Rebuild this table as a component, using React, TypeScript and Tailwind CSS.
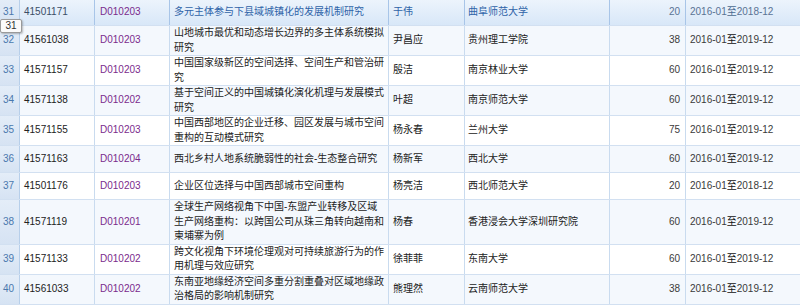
import React from 'react';

type Row = {
  no: number;
  id: string;
  code: string;
  title: string;
  name: string;
  org: string;
  amount: number;
  period: string;
};

const rows: Row[] = [
  { no: 31, id: '41501171', code: 'D010203', title: '多元主体参与下县域城镇化的发展机制研究', name: '于伟', org: '曲阜师范大学', amount: 20, period: '2018-12' },
  { no: 32, id: '41561038', code: 'D010203', title: '山地城市最优和动态增长边界的多主体系统模拟研究', name: '尹昌应', org: '贵州理工学院', amount: 38, period: '2019-12' },
  { no: 33, id: '41571157', code: 'D010203', title: '中国国家级新区的空间选择、空间生产和管治研究', name: '殷洁', org: '南京林业大学', amount: 60, period: '2019-12' },
  { no: 34, id: '41571138', code: 'D010202', title: '基于空间正义的中国城镇化演化机理与发展模式研究', name: '叶超', org: '南京师范大学', amount: 60, period: '2019-12' },
  { no: 35, id: '41571155', code: 'D010203', title: '中国西部地区的企业迁移、园区发展与城市空间重构的互动模式研究', name: '杨永春', org: '兰州大学', amount: 75, period: '2019-12' },
  { no: 36, id: '41571163', code: 'D010204', title: '西北乡村人地系统脆弱性的社会-生态整合研究', name: '杨新军', org: '西北大学', amount: 60, period: '2019-12' },
  { no: 37, id: '41501176', code: 'D010203', title: '企业区位选择与中国西部城市空间重构', name: '杨亮洁', org: '西北师范大学', amount: 20, period: '2018-12' },
  { no: 38, id: '41571119', code: 'D010201', title: '全球生产网络视角下中国-东盟产业转移及区域生产网络重构：以跨国公司从珠三角转向越南和柬埔寨为例', name: '杨春', org: '香港浸会大学深圳研究院', amount: 60, period: '2019-12' },
  { no: 39, id: '41571133', code: 'D010202', title: '跨文化视角下环境伦理观对可持续旅游行为的作用机理与效应研究', name: '徐菲菲', org: '东南大学', amount: 60, period: '2019-12' },
  { no: 40, id: '41561033', code: 'D010202', title: '东南亚地缘经济空间多重分割重叠对区域地缘政治格局的影响机制研究', name: '熊理然', org: '云南师范大学', amount: 38, period: '2019-12' },
];

function GridRow({ row, hover, striped }: { row: Row; hover: boolean; striped: boolean }) {
  const bg = hover
    ? 'bg-gradient-to-b from-[#edf4fc] to-[#d8e7f8]'
    : striped
    ? 'bg-[#f4f8fd]'
    : 'bg-white';
  const line = hover ? 'border-[#a8c5e8]' : 'border-[#c9dbef]';
  const text = hover ? 'text-[#2f63a8]' : 'text-[#222]';
  const muted = hover ? 'text-[#5a7394]' : 'text-[#3a3a3a]';

  return (
    <div
      className={`grid grid-cols-[20px_75px_75px_219px_76px_145px_76px_1fr] min-h-[27px] border-b border-[#d2e0f1] ${bg}`}
    >
      <div className="flex items-center justify-end pr-[5px] border-r border-[#b7cfea] bg-gradient-to-b from-[#e4edf8] to-[#d6e3f3] text-[#4a78ad]">
        {row.no}
      </div>
      <div className={`flex items-center pl-[4px] border-r ${line} ${hover ? 'text-[#3b4d66]' : 'text-[#222]'}`}>{row.id}</div>
      <div className={`flex items-center pl-[5px] border-r ${line} text-[#7b2b8c]`}>{row.code}</div>
      <div className={`flex items-center pl-[4px] pr-[2px] border-r ${line} ${text}`}>
        <span className="leading-[14.5px]">{row.title}</span>
      </div>
      <div className={`flex items-center pl-[4px] border-r ${line} ${text}`}>{row.name}</div>
      <div className={`flex items-center pl-[3px] border-r ${line} ${text} whitespace-nowrap overflow-hidden`}>{row.org}</div>
      <div className={`flex items-center justify-end pr-[5px] border-r ${line} ${muted}`}>{row.amount}</div>
      <div className={`flex items-center pl-[4px] ${muted} whitespace-nowrap`}>
        2016-01<span className={hover ? 'text-[#4a6a90]' : 'text-[#111]'}>至</span>
        {row.period}
      </div>
    </div>
  );
}

export default function App() {
  return (
    <div
      className="relative w-[800px] h-[307px] overflow-hidden bg-white text-[10px] leading-[14.5px]"
      style={{ fontFamily: '"Liberation Sans", Arial, "Noto Sans CJK SC", sans-serif' }}
    >
      <div className="-mt-px">
        {rows.map((row, i) => (
          <GridRow key={row.no} row={row} hover={i === 0} striped={row.no % 2 === 0} />
        ))}
      </div>

      {/* row number tooltip */}
      <div className="absolute left-0 top-[19px] w-[22px] h-[14px] flex items-center justify-center bg-[#fbfbfb] border border-[#9a9a9a] rounded-[2px] shadow-[1px_1px_2px_rgba(0,0,0,0.25)] text-[#333]">
        31
      </div>
    </div>
  );
}
